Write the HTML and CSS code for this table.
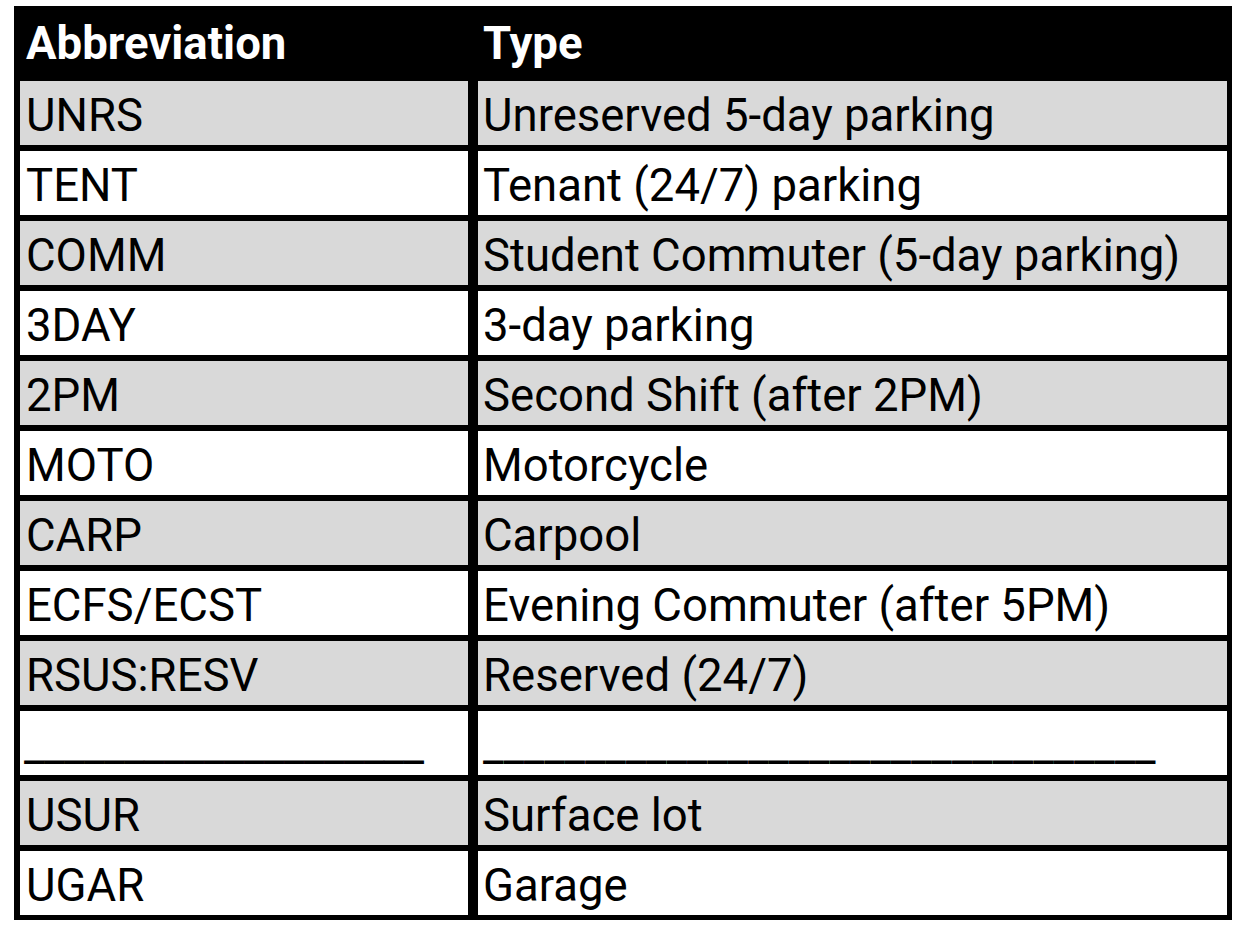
FILE: index.html
```html
<!DOCTYPE html>
<html>
<head>
<meta charset="utf-8">
<link rel="stylesheet" href="styles.css">
</head>
<body>
<div class="table">
  <div class="cell head">Abbreviation</div>
  <div class="cell head">Type</div>
  <div class="cell shade">UNRS</div>
  <div class="cell shade">Unreserved 5-day parking</div>
  <div class="cell">TENT</div>
  <div class="cell">Tenant (24/7) parking</div>
  <div class="cell shade">COMM</div>
  <div class="cell shade">Student Commuter (5-day parking)</div>
  <div class="cell">3DAY</div>
  <div class="cell">3-day parking</div>
  <div class="cell shade">2PM</div>
  <div class="cell shade">Second Shift (after 2PM)</div>
  <div class="cell">MOTO</div>
  <div class="cell">Motorcycle</div>
  <div class="cell shade">CARP</div>
  <div class="cell shade">Carpool</div>
  <div class="cell">ECFS/ECST</div>
  <div class="cell">Evening Commuter (after 5PM)</div>
  <div class="cell shade">RSUS:RESV</div>
  <div class="cell shade">Reserved (24/7)</div>
  <div class="cell"><span class="rule left">____________________</span></div>
  <div class="cell"><span class="rule right">_________________________________</span></div>
  <div class="cell shade">USUR</div>
  <div class="cell shade">Surface lot</div>
  <div class="cell">UGAR</div>
  <div class="cell">Garage</div>
</div>
</body>
</html>
```
FILE: styles.css
```css
html, body {
  margin: 0;
  padding: 0;
  background: #ffffff;
}
body {
  padding: 6px 0 0 14px;
  font-family: Roboto, "Liberation Sans", sans-serif;
}
.table {
  width: 1218px;
  box-sizing: border-box;
  background: #000000;
  padding: 0 5px 5px 6px;
  display: grid;
  grid-template-columns: 448px 749px;
  grid-template-rows: 69px repeat(12, 64px);
  column-gap: 10px;
  row-gap: 6px;
}
.cell {
  background: #ffffff;
  color: #000000;
  font-size: 45.5px;
  line-height: 1;
  display: flex;
  align-items: center;
  padding: 6px 0 0 6px;
  white-space: nowrap;
}
.cell:nth-child(even) {
  padding-left: 5px;
}
.cell.shade {
  background: #d9d9d9;
}
.cell.head {
  background: #000000;
  color: #ffffff;
  font-weight: bold;
  padding-top: 7px;
}
.rule {
  display: block;
}
.rule.left {
  margin-left: -2px;
  letter-spacing: -0.55px;
}
.rule.right {
  letter-spacing: -0.15px;
}
```
